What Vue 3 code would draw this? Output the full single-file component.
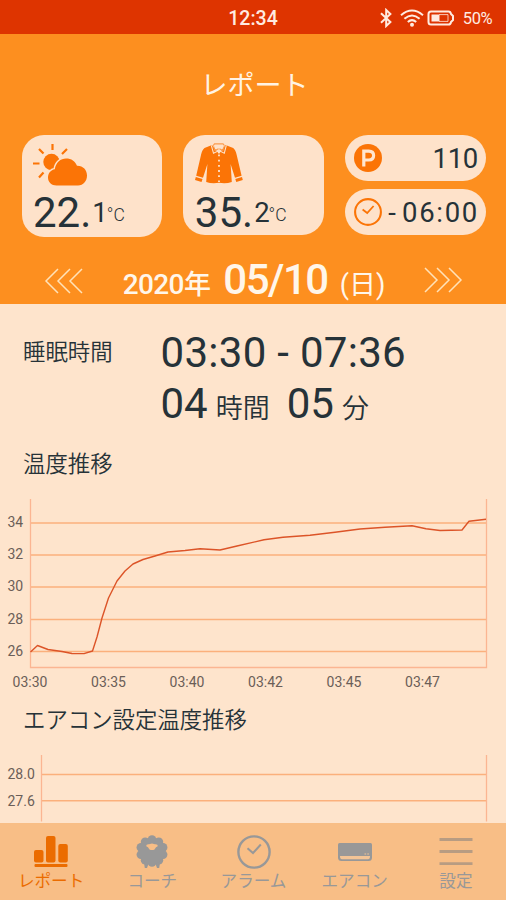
<template>
  <div class="app">
    <div class="status">
      <span class="clock">12:34</span>
      <div class="status-right">
        <svg class="bt" width="14" height="20" viewBox="0 0 14 20">
          <path d="M2 5.2 L11.4 14 L7.2 18 V2 L11.4 6 L2 14.8" />
        </svg>
        <svg class="wifi" width="24" height="18" viewBox="0 0 24 18">
          <path d="M1 6.2 Q12 -3.2 23 6.2 M4.4 9.8 Q12 3.2 19.6 9.8 M7.8 13 Q12 9.2 16.2 13" />
          <circle cx="12" cy="15.8" r="2" />
        </svg>
        <svg class="battery" width="28" height="16" viewBox="0 0 28 16">
          <path d="M4 1.5 H21.5 Q23.6 1.5 24 4 L26 6 V10 L24 12 Q23.6 14.5 21.5 14.5 H4 Q1.5 14.5 1.5 12 V4 Q1.5 1.5 4 1.5 Z" />
          <rect x="4.5" y="4.5" width="8" height="7" />
          <path class="thin" d="M12 4.6 H21 V11.4 H12" />
        </svg>
        <span class="percent">50%</span>
      </div>
    </div>

    <header class="header">
      <h1>レポート</h1>
      <div class="cards">
        <div class="card weather">
          <svg width="56" height="44" viewBox="0 0 56 44">
            <path class="rays" d="M19.5 1 V7 M6 6 L10.5 10.5 M34 6 L29 11 M0 20.5 H6.5 M6 34.5 L10.5 29.5" />
            <circle cx="18.5" cy="19" r="8.2" />
            <path class="cloud" d="M23.5 42.5 C18.5 42.5 15 39 15 34.5 C15 30 18 26.8 21.8 26.2 C22.8 19.5 27.8 15.5 33 15.5 C38.5 15.5 42.2 18.2 44 22.8 C50 22.6 54 27 54 32.5 C54 38 50.3 42.5 45 42.5 Z" />
          </svg>
          <div class="temp"><span class="int">22.</span><span class="dec">1</span><span class="unit">°C</span></div>
        </div>
        <div class="card body">
          <svg width="48" height="44" viewBox="0 0 48 44">
            <path d="M17 2 L9.5 5 Q7 7 6 12 L1.2 32.8 L8 34.8 L12.4 21 L11.2 39 Q17 41 24 39.8 Q31 41 36.8 39 L35.6 21 L40 34.8 L46.6 32.8 L41.7 12 Q40.7 7 38.2 5 L30.5 2 L24 11 Z" />
            <path d="M0.8 34 L7.5 36 L6.5 39 L0 37 Z M47 34 L40.3 36 L41.3 39 L47.8 37 Z" />
            <path class="collar" d="M16.3 2.3 L18.5 10.2 L24 7.6 L29.3 10.2 L31.3 2.3" />
            <path class="neck" d="M18.2 2.6 L19.5 0.9 H28 L29.5 2.6 M18.6 3.5 L20 7.6 L23.6 5.8 M29.2 3.5 L27.8 7.6 L24.4 5.8" />
            <path class="buttons" d="M24 11.5 V39" />
          </svg>
          <div class="temp"><span class="int">35.</span><span class="dec">2</span><span class="unit">°C</span></div>
        </div>
        <div class="pills">
          <div class="pill">
            <svg width="28" height="28" viewBox="0 0 28 28">
              <circle cx="14" cy="14" r="14" />
              <path fill="none" stroke="#ffe6d0" stroke-width="3.2" d="M9.8 22.5 V7.2 H14.8 Q19.6 7.2 19.6 11.6 Q19.6 16 14.8 16 H10" />
            </svg>
            <span class="point">110</span>
          </div>
          <div class="pill">
            <svg width="28" height="28" viewBox="0 0 28 28">
              <circle cx="14" cy="14" r="12.9" fill="none" stroke="#fb7406" stroke-width="2.1" />
              <path fill="none" stroke="#fb7406" stroke-width="1.8" d="M8.6 11.5 L13.2 15 L19.6 8" />
            </svg>
            <span class="minus">-</span>
            <span class="time">06:00</span>
          </div>
        </div>
      </div>
      <div class="date">
        <svg width="40" height="26" viewBox="0 0 40 26">
          <path d="M14 1 L2 13 L14 25 M26 1 L14 13 L26 25 M38 1 L26 13 L38 25" />
        </svg>
        <div class="date-text">
          <span class="year">2020<i>年</i></span>
          <span class="day">05/10</span>
          <span class="week">(日)</span>
        </div>
        <svg class="next" width="40" height="26" viewBox="0 0 40 26">
          <path d="M2 1 L14 13 L2 25 M14 1 L26 13 L14 25 M26 1 L38 13 L26 25" />
        </svg>
      </div>
    </header>

    <main class="main">
      <section class="sleep">
        <h2>睡眠時間</h2>
        <div class="sleep-data">
          <div class="line range">03:30 - 07:36</div>
          <div class="line second"><span>04</span><small>時間</small><span class="min">05</span><small>分</small></div>
        </div>
      </section>

      <h2 class="chart-title">温度推移</h2>
      <svg class="chart" width="506" height="206" viewBox="0 490 506 206">
        <g v-for="t in temps" :key="t.label">
          <line class="grid" x1="30" x2="487" :y1="t.y" :y2="t.y" />
          <text x="7.5" :y="t.y + 4.3">{{ t.label }}</text>
        </g>
        <path class="axis" d="M30.5 499 V667.5 H486.5 V499" />
        <path class="curve" :d="curve" />
        <text v-for="(h, i) in hours" :key="h" class="hour" :x="30 + i * 78.5" y="687">{{ h }}</text>
      </svg>

      <h2 class="chart-title second-title">エアコン設定温度推移</h2>
      <svg class="chart" width="506" height="80" viewBox="0 743 506 80">
        <g v-for="t in settings" :key="t.label">
          <line class="grid" x1="41" x2="487" :y1="t.y" :y2="t.y" />
          <text x="7.5" :y="t.y + 4.7">{{ t.label }}</text>
        </g>
        <path class="axis" d="M41.5 755 V821.5 M486.5 755 V821.5" />
      </svg>
    </main>

    <nav class="tabs">
      <div class="tab active">
        <svg width="34" height="34" viewBox="0 0 34 34">
          <rect x="0" y="15" width="9.5" height="12.5" rx="2" />
          <rect x="12" y="1" width="9.5" height="26.5" rx="2" />
          <rect x="24.3" y="9" width="9.5" height="18.5" rx="2" />
          <rect x="0.5" y="29" width="33" height="3" rx="1" />
        </svg>
        <span>レポート</span>
      </div>
      <div class="tab">
        <svg width="34" height="34" viewBox="0 0 34 34">
          <path d="M9 28 L9.8 33 H12 L13.5 29 H20.5 L22 33 H24.2 L25 28 Z" />
          <circle v-for="(c, i) in wool" :key="i" :cx="c[0]" :cy="c[1]" r="4.4" />
          <circle cx="17" cy="16" r="13.2" />
          <path fill="#f8be86" d="M11.3 11.2 Q11 9 14 9.2 L17 8.4 L20 9.2 Q23 9 22.7 11.2 L21 12.2 L19.5 14.4 Q17 15.8 14.5 14.4 L13 12.2 Z" />
        </svg>
        <span>コーチ</span>
      </div>
      <div class="tab">
        <svg width="34" height="34" viewBox="0 0 34 34">
          <circle cx="17" cy="17" r="15.6" fill="none" stroke="#989898" stroke-width="2.4" />
          <path fill="none" stroke="#989898" stroke-width="2" d="M10.5 13.3 L16 18 L23.8 9.5" />
        </svg>
        <span>アラーム</span>
      </div>
      <div class="tab">
        <svg width="34" height="34" viewBox="0 0 34 34">
          <path d="M1.5 8 H32.5 Q34 8 34 9.5 V22.5 Q34 26 30.5 26 H3.5 Q0 26 0 22.5 V9.5 Q0 8 1.5 8 Z" />
          <path fill="#f2c496" d="M2 21 H32 Q32 24.2 30 24.2 H4 Q2 24.2 2 21 Z" />
          <rect x="26.5" y="18.4" width="1.6" height="1.2" fill="#e4bd95" />
          <rect x="29.3" y="18.4" width="1.6" height="1.2" fill="#e4bd95" />
        </svg>
        <span>エアコン</span>
      </div>
      <div class="tab">
        <svg width="34" height="34" viewBox="0 0 34 34">
          <path fill="none" stroke="#b89c82" stroke-width="2.8" d="M0.5 4.5 H33.5 M0.5 16.5 H33.5 M0.5 28.7 H33.5" />
        </svg>
        <span>設定</span>
      </div>
    </nav>
  </div>
</template>

<script setup>
const temps = [
  { label: '34', y: 523 },
  { label: '32', y: 555 },
  { label: '30', y: 587 },
  { label: '28', y: 619.5 },
  { label: '26', y: 651.5 }
]
const settings = [
  { label: '28.0', y: 774.5 },
  { label: '27.6', y: 800.8 }
]
const hours = ['03:30', '03:35', '03:40', '03:42', '03:45', '03:47']

const points = [
  [30.5, 652], [37.5, 645.5], [48, 649.5], [62, 651.5], [72, 653.5], [84, 653.6], [92.5, 651],
  [97, 637], [102, 618], [108.5, 598], [117, 581], [125, 571], [133, 564], [143, 559.5],
  [155, 556], [168, 552], [185, 550.5], [200, 548.8], [220, 550], [237, 546], [264, 539.8],
  [283, 537.3], [310, 535.3], [335, 532.3], [360, 529], [385, 527.3], [412, 525.7],
  [426, 528.8], [440, 530.5], [462, 530], [469, 521.2], [486, 519.3]
]
const curve = 'M' + points.map(p => p.join(' ')).join(' L')

// wool puffs around the sheep
const wool = Array.from({ length: 10 }, (_, i) => {
  const a = (i * 36 - 90) * Math.PI / 180
  return [17 + 11.6 * Math.cos(a), 16 + 11.4 * Math.sin(a)]
})
</script>

<style>
body {
  margin: 0;
  background: #fee4cc;
}
</style>

<style scoped>
.app {
  width: 506px;
  height: 900px;
  display: flex;
  flex-direction: column;
  overflow: hidden;
  background: #fee4cc;
  color: #263238;
  font-family: Roboto, "Noto Sans CJK JP", sans-serif;
}

svg {
  display: block;
  flex: none;
}

h1, h2 {
  margin: 0;
  font-weight: 400;
}

.status {
  height: 34px;
  flex: none;
  display: grid;
  grid-template-columns: 1fr auto 1fr;
  align-items: center;
  background: #de3400;
  color: #ffebe0;
}
.clock {
  grid-column: 2;
  font-size: 19.5px;
  font-weight: 500;
  line-height: 34px;
  padding-top: 2px;
}
.status-right {
  display: flex;
  align-items: center;
  justify-content: flex-end;
  padding-right: 14px;
}
.status-right svg {
  fill: none;
  stroke: #ffebe0;
  stroke-width: 2;
}
.status-right circle, .status-right rect {
  fill: #ffebe0;
  stroke: none;
}
.wifi {
  margin-left: 6px;
}
.battery {
  margin-left: 3px;
}
.status-right .thin {
  stroke-width: 0.8;
}
.percent {
  margin-left: 8px;
  font-size: 16.5px;
  letter-spacing: -0.5px;
  padding-top: 1px;
}
.bt {
  margin-right: 1px;
}

.header {
  height: 270px;
  flex: none;
  box-sizing: border-box;
  padding-top: 32px;
  background: #fd8f1f;
}
h1 {
  height: 40px;
  line-height: 40px;
  text-align: center;
  font-size: 27px;
  color: #fff3e4;
  padding-left: 3px;
}

.cards {
  display: flex;
  align-items: flex-start;
  gap: 21px;
  padding: 29px 20px 0 21.5px;
}
.card {
  width: 141px;
  height: 100px;
  box-sizing: border-box;
  border-radius: 22px;
  background: #fee2ca;
  padding: 8px 0 0 11.5px;
}
.card.weather {
  height: 102px;
}
.card svg, .pill svg {
  fill: #fb7406;
}
.rays {
  fill: none;
  stroke: #fb7406;
  stroke-width: 2.2;
}
.cloud {
  stroke: #fee2ca;
  stroke-width: 3;
  paint-order: stroke;
}
.collar {
  fill: none;
  stroke: #fee2ca;
  stroke-width: 1.1;
}
.neck {
  fill: none;
  stroke: #fb9a4c;
  stroke-width: 1.1;
}
.buttons {
  fill: none;
  stroke: #fee2ca;
  stroke-width: 1.8;
  stroke-dasharray: 1.8 3.4;
}
.temp {
  display: flex;
  align-items: flex-start;
  line-height: 52px;
  height: 50px;
}
.int {
  font-size: 42px;
}
.dec {
  font-size: 27.5px;
  margin-left: 1px;
}
.unit {
  font-size: 17.5px;
  font-weight: 300;
  line-height: 56px;
  margin-left: -1px;
}
.pills {
  width: 141px;
  display: flex;
  flex-direction: column;
  gap: 8px;
}
.pill {
  height: 46px;
  box-sizing: border-box;
  border-radius: 23px;
  background: #fee2ca;
  display: flex;
  align-items: center;
  padding: 0 8px 0 9px;
  font-size: 27.5px;
}
.point {
  margin-left: auto;
  letter-spacing: -0.3px;
}
.minus {
  margin-left: 6px;
}
.time {
  margin-left: auto;
  letter-spacing: 1.7px;
  margin-right: -1px;
}

.date {
  display: flex;
  justify-content: space-between;
  align-items: center;
  height: 60px;
  padding: 14px 43px 0 44px;
}
.date svg {
  fill: none;
  stroke: #ffe2b8;
  stroke-width: 1.5;
}
.date .next {
  margin-top: -2px;
}
.date-text {
  display: flex;
  align-items: baseline;
  color: #fff6ea;
  margin: -4px 0 0 1px;
}
.year {
  font-size: 28px;
  font-weight: 500;
  letter-spacing: -0.6px;
}
.year i {
  font-style: normal;
  font-size: 27px;
}
.day {
  font-size: 42px;
  font-weight: 500;
  margin-left: 13px;
  letter-spacing: -1.5px;
}
.week {
  font-size: 27px;
  margin-left: 12px;
}

.main {
  height: 519px;
  flex: none;
  overflow: hidden;
}
h2 {
  font-size: 22.4px;
  line-height: 30px;
  padding-left: 23px;
  font-weight: 350;
}
.sleep {
  display: flex;
  height: 145px;
  box-sizing: border-box;
  padding-top: 24px;
}
.sleep h2 {
  width: 137.5px;
  padding-top: 9px;
}
.line {
  height: 51px;
  line-height: 50px;
  font-size: 42px;
  white-space: nowrap;
}
.range {
  letter-spacing: 0.3px;
}
.second {
  display: flex;
  align-items: baseline;
}
.second small {
  font-size: 27px;
  font-weight: 350;
  margin-left: 8px;
  line-height: 50px;
}
.second .min {
  margin-left: 17px;
}

.chart text {
  font-size: 14px;
  fill: #6b5e58;
}
.chart .hour {
  text-anchor: middle;
}
.grid {
  stroke: #fbb07c;
  stroke-width: 1.5;
}
.axis {
  fill: none;
  stroke: #fbb592;
  stroke-width: 1.3;
}
.curve {
  fill: none;
  stroke: #dc5428;
  stroke-width: 1.4;
  stroke-linejoin: round;
}
.chart-title {
  padding-bottom: 11px;
}
.second-title {
  padding-top: 9px;
  padding-bottom: 8px;
}

.tabs {
  height: 77px;
  flex: none;
  display: flex;
  background: #f8be86;
  color: #989898;
}
.tab {
  flex: 1;
  display: flex;
  flex-direction: column;
  align-items: center;
  padding-top: 12px;
  font-size: 16.6px;
  line-height: 24px;
}
.tab svg {
  fill: #989898;
  margin-left: 1px;
}
.tab span {
  margin: 1px 0 0 1px;
}
.tab.active {
  color: #eb6c00;
}
.tab.active svg {
  fill: #eb6c00;
}
</style>
